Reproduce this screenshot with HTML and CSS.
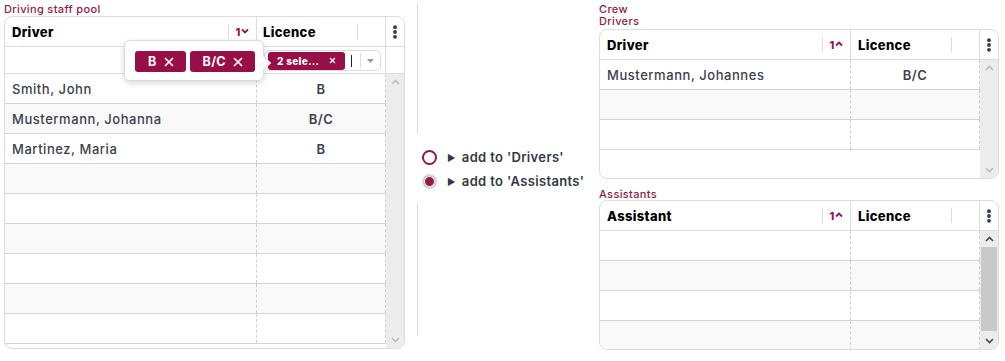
FILE: index.html
```html
<!DOCTYPE html>
<html lang="en">
<head>
<meta charset="utf-8">
<title>Crew assignment</title>
<link rel="stylesheet" href="styles.css">
</head>
<body>
<div class="page">
  <section class="pool">
    <div class="label">Driving staff pool</div>
    <div class="grid grid-left">
      <div class="head">
        <div class="hcell c1"><span class="htext">Driver</span><span class="sort">1<svg width="8" height="6" viewBox="0 0 8 6"><path d="M1 1.5 L4 4.5 L7 1.5" fill="none" stroke="currentColor" stroke-width="1.8"/></svg></span></div>
        <div class="hcell c2"><span class="htext">Licence</span><span class="sort"></span></div>
        <div class="menu"><svg width="6" height="14" viewBox="0 0 6 14"><circle cx="3" cy="2.2" r="1.9"/><circle cx="3" cy="7" r="1.9"/><circle cx="3" cy="11.8" r="1.9"/></svg></div>
      </div>
      <div class="filter">
        <div class="fcell c1"></div>
        <div class="fcell c2">
          <div class="select">
            <span class="chip chip-sm">2 sele... <svg width="7" height="7" viewBox="0 0 7 7"><path d="M1 1 L6 6 M6 1 L1 6" stroke="#fff" stroke-width="1.2"/></svg></span>
            <span class="cursor"></span>
            <span class="drop"><svg width="7" height="4" viewBox="0 0 7 4"><path d="M0 0 H7 L3.5 4 Z" fill="#9a9a9a"/></svg></span>
          </div>
        </div>
        <div class="menu menu-blank"></div>
      </div>
      <div class="body">
        <div class="rows">
          <div class="row"><div class="cell c1">Smith, John</div><div class="cell c2">B</div></div>
          <div class="row"><div class="cell c1">Mustermann, Johanna</div><div class="cell c2">B/C</div></div>
          <div class="row"><div class="cell c1">Martinez, Maria</div><div class="cell c2">B</div></div>
          <div class="row"><div class="cell c1"></div><div class="cell c2"></div></div>
          <div class="row"><div class="cell c1"></div><div class="cell c2"></div></div>
          <div class="row"><div class="cell c1"></div><div class="cell c2"></div></div>
          <div class="row"><div class="cell c1"></div><div class="cell c2"></div></div>
          <div class="row"><div class="cell c1"></div><div class="cell c2"></div></div>
          <div class="row"><div class="cell c1"></div><div class="cell c2"></div></div>
        </div>
        <div class="scroll">
          <span class="arrow"><svg width="9" height="6" viewBox="0 0 9 6"><path d="M1 5 L4.5 1.5 L8 5" fill="none" stroke="currentColor" stroke-width="1.6"/></svg></span>
          <span class="track"></span>
          <span class="arrow"><svg width="9" height="6" viewBox="0 0 9 6"><path d="M1 1 L4.5 4.5 L8 1" fill="none" stroke="currentColor" stroke-width="1.6"/></svg></span>
        </div>
      </div>
      <div class="popover">
        <span class="chip">B <svg width="10" height="10" viewBox="0 0 10 10"><path d="M1 1 L9 9 M9 1 L1 9" stroke="#fff" stroke-width="1.7"/></svg></span>
        <span class="chip">B/C <svg width="10" height="10" viewBox="0 0 10 10"><path d="M1 1 L9 9 M9 1 L1 9" stroke="#fff" stroke-width="1.7"/></svg></span>
      </div>
    </div>
  </section>

  <section class="middle">
    <div class="vline"></div>
    <div class="choices">
      <label class="choice"><span class="radio"></span><span class="tri">&#9654;</span>add to 'Drivers'</label>
      <label class="choice"><span class="radio radio-on"></span><span class="tri">&#9654;</span>add to 'Assistants'</label>
    </div>
    <div class="vline vline-bottom"></div>
  </section>

  <section class="crew">
    <div class="label">Crew</div>
    <div class="label">Drivers</div>
    <div class="grid grid-right grid-first">
      <div class="head">
        <div class="hcell c1"><span class="htext">Driver</span><span class="sort">1<svg width="8" height="6" viewBox="0 0 8 6"><path d="M1 4.5 L4 1.5 L7 4.5" fill="none" stroke="currentColor" stroke-width="1.8"/></svg></span></div>
        <div class="hcell c2"><span class="htext">Licence</span><span class="sort"></span></div>
        <div class="menu"><svg width="6" height="14" viewBox="0 0 6 14"><circle cx="3" cy="2.2" r="1.9"/><circle cx="3" cy="7" r="1.9"/><circle cx="3" cy="11.8" r="1.9"/></svg></div>
      </div>
      <div class="body">
        <div class="rows">
          <div class="row"><div class="cell c1">Mustermann, Johannes</div><div class="cell c2">B/C</div></div>
          <div class="row"><div class="cell c1"></div><div class="cell c2"></div></div>
          <div class="row"><div class="cell c1"></div><div class="cell c2"></div></div>
        </div>
        <div class="scroll">
          <span class="arrow"><svg width="9" height="6" viewBox="0 0 9 6"><path d="M1 5 L4.5 1.5 L8 5" fill="none" stroke="currentColor" stroke-width="1.6"/></svg></span>
          <span class="track"></span>
          <span class="arrow"><svg width="9" height="6" viewBox="0 0 9 6"><path d="M1 1 L4.5 4.5 L8 1" fill="none" stroke="currentColor" stroke-width="1.6"/></svg></span>
        </div>
      </div>
    </div>

    <div class="label label-gap">Assistants</div>
    <div class="grid grid-right">
      <div class="head">
        <div class="hcell c1"><span class="htext">Assistant</span><span class="sort">1<svg width="8" height="6" viewBox="0 0 8 6"><path d="M1 4.5 L4 1.5 L7 4.5" fill="none" stroke="currentColor" stroke-width="1.8"/></svg></span></div>
        <div class="hcell c2"><span class="htext">Licence</span><span class="sort"></span></div>
        <div class="menu"><svg width="6" height="14" viewBox="0 0 6 14"><circle cx="3" cy="2.2" r="1.9"/><circle cx="3" cy="7" r="1.9"/><circle cx="3" cy="11.8" r="1.9"/></svg></div>
      </div>
      <div class="body">
        <div class="rows">
          <div class="row"><div class="cell c1"></div><div class="cell c2"></div></div>
          <div class="row"><div class="cell c1"></div><div class="cell c2"></div></div>
          <div class="row"><div class="cell c1"></div><div class="cell c2"></div></div>
          <div class="row"><div class="cell c1"></div><div class="cell c2"></div></div>
          <div class="row"><div class="cell c1"></div><div class="cell c2"></div></div>
        </div>
        <div class="scroll scroll-active">
          <span class="arrow"><svg width="9" height="6" viewBox="0 0 9 6"><path d="M1 5 L4.5 1.5 L8 5" fill="none" stroke="currentColor" stroke-width="1.6"/></svg></span>
          <span class="track"><span class="thumb"></span></span>
          <span class="arrow"><svg width="9" height="6" viewBox="0 0 9 6"><path d="M1 1 L4.5 4.5 L8 1" fill="none" stroke="currentColor" stroke-width="1.6"/></svg></span>
        </div>
      </div>
    </div>
  </section>
</div>
</body>
</html>
```

FILE: styles.css
```css
* { box-sizing: border-box; }

body {
  margin: 0;
  background: #fff;
  font-family: Inter, "DejaVu Sans", sans-serif;
  color: #3b424b;
}

.page {
  display: flex;
  padding-top: 3px;
  height: 361px;
}

.label {
  font-size: 11px;
  line-height: 12px;
  height: 12px;
  color: #8e1a4a;
  letter-spacing: 0.35px;
  font-weight: 500;
  white-space: nowrap;
}

/* ---------- grids ---------- */
.grid {
  position: relative;
  display: flex;
  flex-direction: column;
  border: 1px solid #dcdcdc;
  border-radius: 8px;
  background: #fff;
}

.pool {
  margin-left: 4px;
  width: 401px;
  display: flex;
  flex-direction: column;
}

.grid-left { margin-top: 1px; height: 333px; }
.grid-left .c1 { width: 252px; }

.grid-right { height: 150px; }
.grid-right .c1 { width: 251px; }
.grid-first { margin-top: 2px; }

.c2 { width: 129px; }

.head {
  display: flex;
  height: 30px;
  border-bottom: 1px solid #dcdcdc;
  flex: none;
}

.hcell {
  display: flex;
  align-items: center;
  border-right: 1px solid #dcdcdc;
  padding-left: 7px;
  font-size: 13px;
  font-weight: 800;
  letter-spacing: 0.35px;
  color: #000;
}
.grid-left .hcell.c2 { padding-left: 6px; }

.htext { flex: 1; }

.sort {
  width: 28px;
  height: 15px;
  border-left: 1px solid #dcdcdc;
  display: flex;
  align-items: center;
  justify-content: center;
  gap: 1px;
  font-size: 11px;
  font-weight: 800;
  letter-spacing: 0;
  color: #8e1a4a;
}
.sort svg { margin-top: -2px; }

.menu {
  flex: 1;
  display: flex;
  justify-content: center;
  padding-top: 8px;
  fill: #2d3b4c;
}

.filter {
  display: flex;
  height: 27px;
  border-bottom: 1px solid #dcdcdc;
  flex: none;
}
.fcell { border-right: 1px solid #dcdcdc; }
.fcell.c2 { padding: 3px 0 0 7px; }

.select {
  display: flex;
  align-items: center;
  width: 117px;
  height: 21px;
  border: 1px solid #dcdcdc;
  border-radius: 5px;
  padding-left: 3px;
}

.chip {
  display: inline-flex;
  align-items: center;
  gap: 7px;
  height: 21px;
  padding: 0 12px 0 13px;
  border-radius: 3px;
  background: #980f47;
  color: #fff;
  font-size: 12.5px;
  font-weight: 700;
  letter-spacing: 0.3px;
}

.chip-sm {
  height: 18px;
  width: 77px;
  padding: 0 0 0 9px;
  gap: 10px;
  font-size: 10px;
  font-weight: 800;
}

.cursor {
  width: 1px;
  height: 12px;
  background: #222;
  margin-left: 6px;
}

.drop {
  margin-left: auto;
  width: 20px;
  height: 15px;
  border-left: 1px solid #dcdcdc;
  display: flex;
  align-items: center;
  justify-content: center;
}

.popover {
  position: absolute;
  left: 119px;
  top: 23px;
  display: flex;
  gap: 4px;
  padding: 10px 8px 8px 10px;
  background: #fff;
  border: 1px solid #dcdcdc;
  border-radius: 6px;
  box-shadow: 0 2px 6px rgba(0, 0, 0, 0.16);
}
.popover::after {
  content: "";
  position: absolute;
  right: -6px;
  top: 17px;
  width: 9px;
  height: 9px;
  background: #fff;
  border-right: 1px solid #dcdcdc;
  border-top: 1px solid #dcdcdc;
  transform: rotate(45deg);
}

.body {
  display: flex;
  flex: 1;
  min-height: 0;
  overflow: hidden;
  border-radius: 0 0 7px 7px;
}

.rows {
  display: flex;
  flex-direction: column;
}
.grid-left .rows { width: 381px; }
.grid-right .rows { width: 380px; }

.row {
  display: flex;
  height: 30px;
  flex: none;
  border-bottom: 1px solid #d4d4d4;
}
.row:nth-child(even) { background: #f9f9f9; }

.cell {
  display: flex;
  align-items: center;
  border-right: 1px dashed #cfcfcf;
  font-size: 13px;
  font-weight: 500;
  letter-spacing: 0.55px;
  color: #3b424b;
}
.cell.c1 { padding-left: 7px; }
.cell.c2 { justify-content: center; font-weight: 600; }

.scroll {
  flex: 1;
  display: flex;
  flex-direction: column;
  background: #ececec;
  color: #bdbdbd;
}
.scroll-active { color: #4a4a4a; }

.arrow {
  height: 16px;
  display: flex;
  align-items: center;
  justify-content: center;
  flex: none;
}

.track {
  flex: 1;
  display: flex;
  padding: 0 1px;
}
.thumb {
  flex: 1;
  margin: 0 0 2px;
  background: #c9c9c9;
}

/* ---------- middle ---------- */
.middle {
  width: 194px;
  padding-left: 12px;
  display: flex;
  flex-direction: column;
}

.vline {
  width: 1px;
  height: 131px;
  background: #dcdcdc;
  flex: none;
}
.vline-bottom { height: 133px; }

.choices {
  display: flex;
  flex-direction: column;
  gap: 8px;
  padding: 15px 0 14px 5px;
}

.choice {
  display: flex;
  align-items: center;
  height: 16px;
  font-size: 13px;
  font-weight: 600;
  letter-spacing: 0.35px;
  color: #333a44;
  white-space: nowrap;
}

.radio {
  width: 15px;
  height: 15px;
  border: 2px solid #8e1a4a;
  border-radius: 50%;
  margin-right: 10px;
  flex: none;
}
.radio-on {
  border-color: #d6d6d6;
  background: #8e1a4a;
  box-shadow: inset 0 0 0 1px #fff;
}

.tri {
  font-size: 9px;
  margin-right: 6px;
  color: #333a44;
}

/* ---------- right ---------- */
.crew {
  width: 400px;
  display: flex;
  flex-direction: column;
}

.label-gap { margin-top: 9px; }
```
